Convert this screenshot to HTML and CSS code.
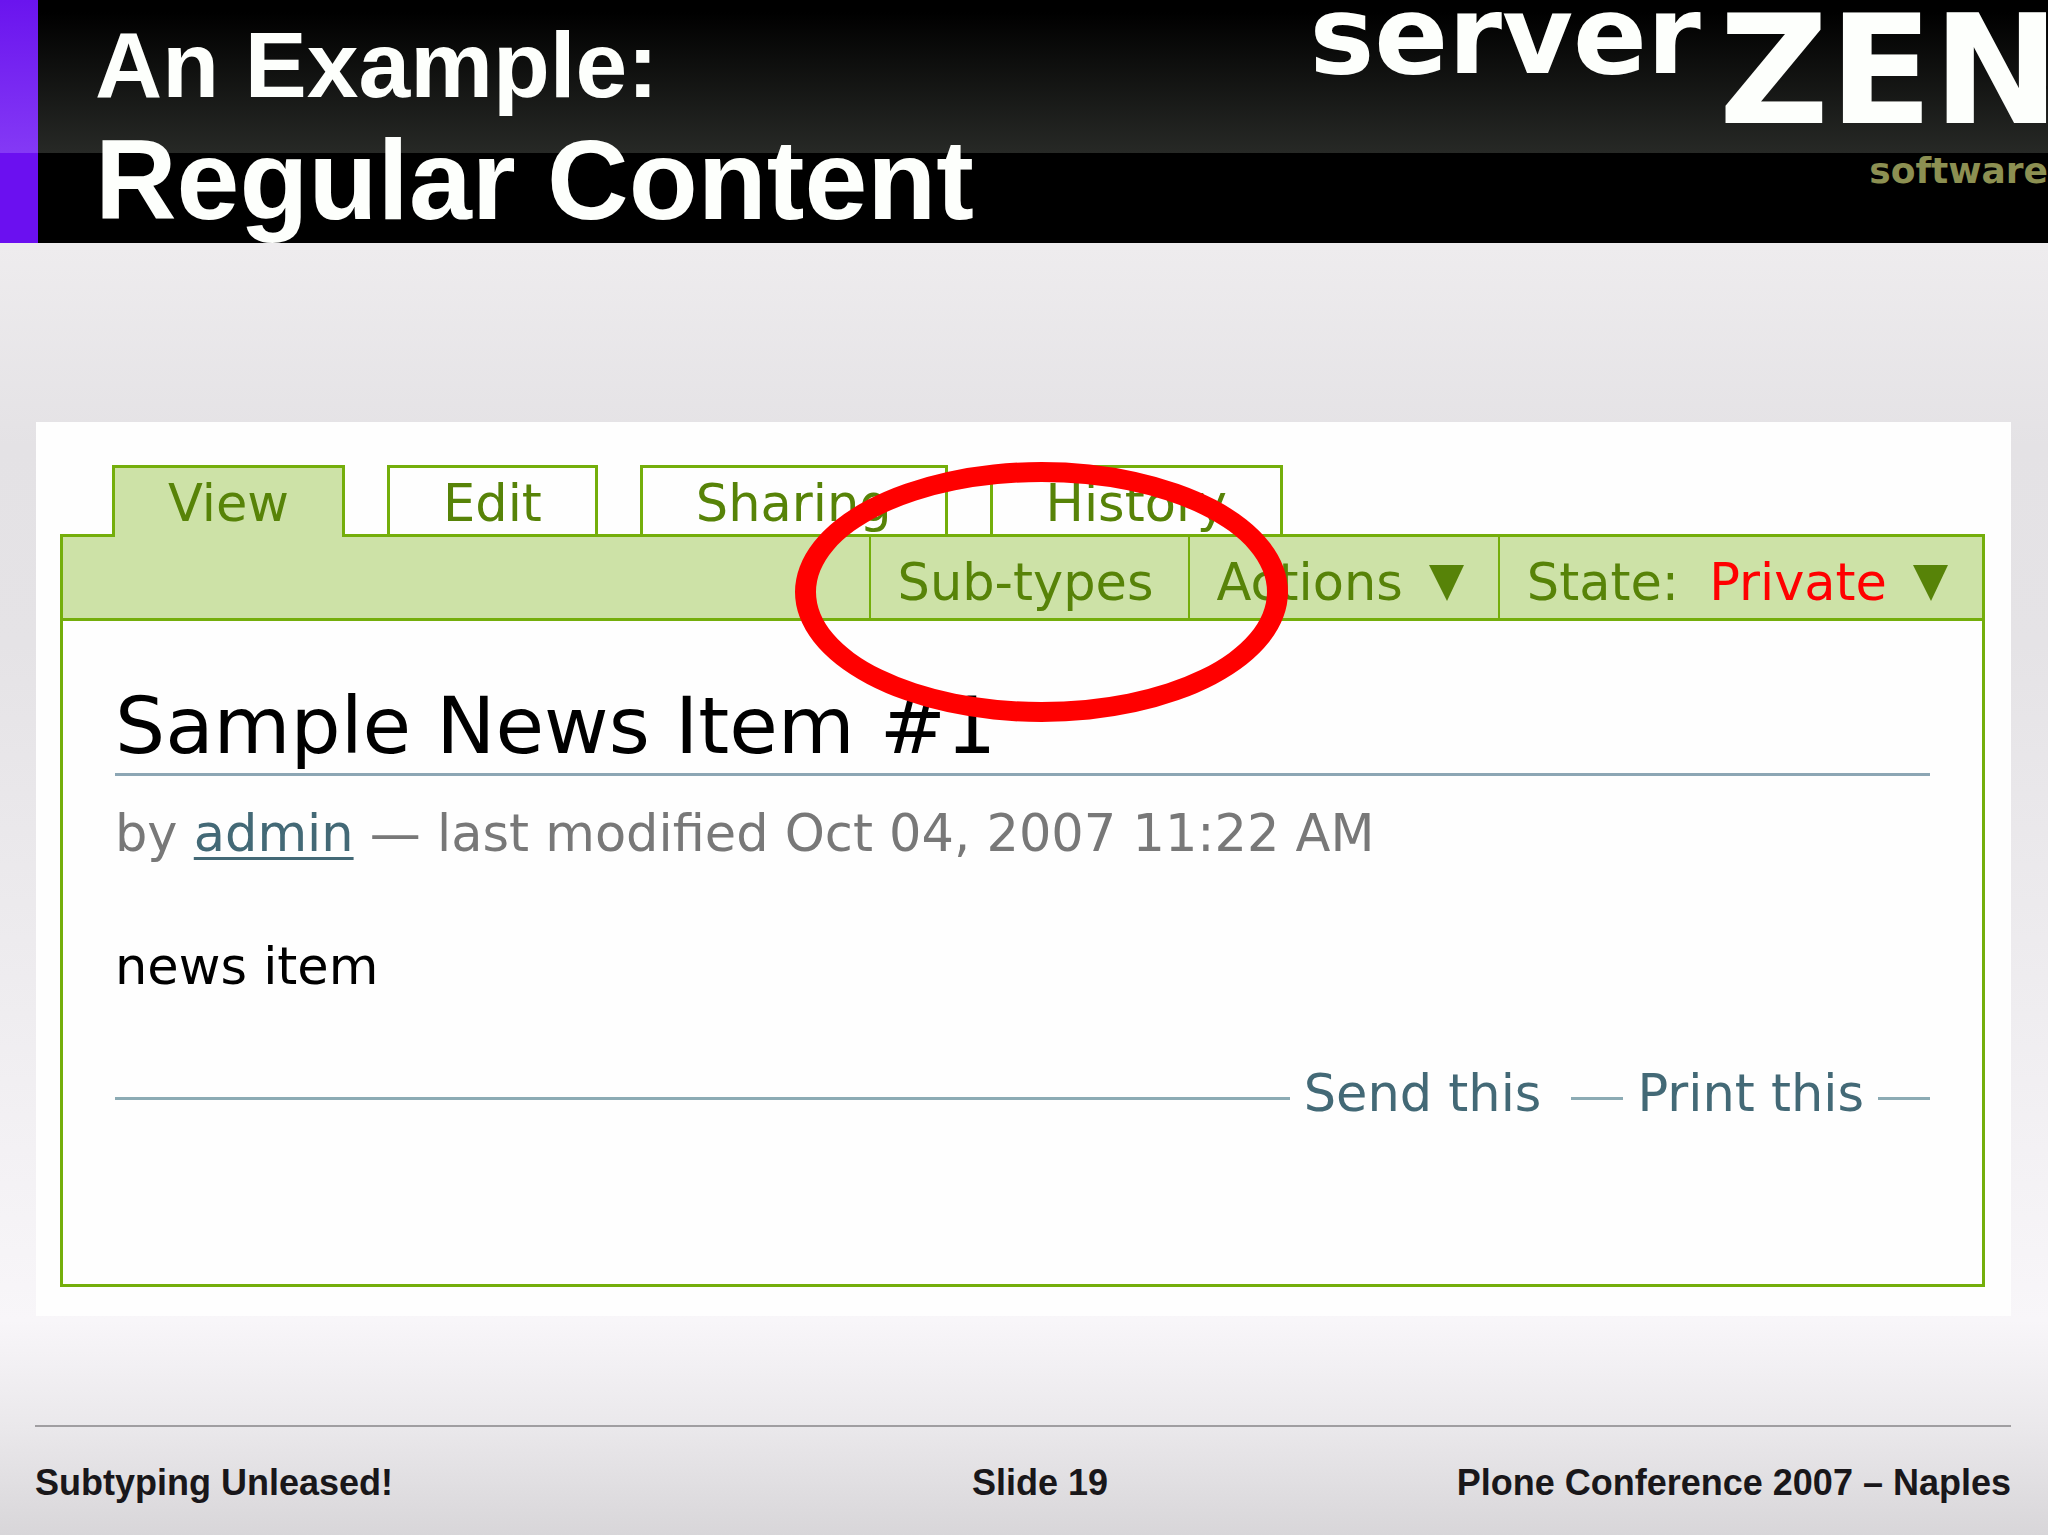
FILE: index.html
```
<!DOCTYPE html>
<html lang="en">
<head>
  <meta charset="UTF-8">
  <title>Subtyping Unleased! – Regular Content</title>
  <link rel="stylesheet" href="styles.css">
</head>
<body>

  <header class="slide-header">
    <h1 class="slide-title">
      <span class="title-small">An Example:</span>
      <span class="title-big">Regular Content</span>
    </h1>
    <div class="logo">
      <div class="logo-name">
        <span class="logo-server">server</span>
        <span class="logo-zen">ZEN</span>
      </div>
      <div class="logo-software">software</div>
    </div>
  </header>

  <main class="panel">
    <nav class="tabs">
      <a href="#" class="tab active">View</a>
      <a href="#" class="tab">Edit</a>
      <a href="#" class="tab">Sharing</a>
      <a href="#" class="tab">History</a>
    </nav>

    <div class="content-box">
      <div class="toolbar">
        <div class="menu">
          <button type="button" class="menu-btn">Sub-types</button>
          <svg class="marker" viewBox="0 0 493 260">
            <path fill="#ff0000" fill-rule="evenodd" d="M0 130a246.500 130 0 1 0 493 0a246.500 130 0 1 0 -493 0zM21 130a225.500 110 0 1 0 451 0a225.500 110 0 1 0 -451 0z"/>
          </svg>
        </div>
        <div class="menu">
          <button type="button" class="menu-btn">Actions
            <svg class="arrow" viewBox="0 0 35 36"><path d="M0 0h35L18 36z"/></svg>
          </button>
        </div>
        <div class="menu">
          <button type="button" class="menu-btn"><span>State: <span class="private">Private</span></span>
            <svg class="arrow" viewBox="0 0 35 36"><path d="M0 0h35L18 36z"/></svg>
          </button>
        </div>
      </div>

      <article class="document">
        <h2>Sample News Item #1</h2>
        <p class="byline">by <a href="#">admin</a> — last modified Oct 04, 2007 11:22 AM</p>
        <p class="body-text">news item</p>
        <div class="doc-actions">
          <span class="rule long"></span>
          <a href="#" class="send">Send this</a>
          <span class="rule"></span>
          <a href="#">Print this</a>
          <span class="rule"></span>
        </div>
      </article>
    </div>
  </main>

  <footer class="slide-footer">
    <div>Subtyping Unleased!</div>
    <div class="slide-number">Slide 19</div>
    <div class="conference">Plone Conference 2007 – Naples</div>
  </footer>

</body>
</html>
```
FILE: styles.css
```
* {
  box-sizing: border-box;
}

body {
  margin: 0;
  min-height: 100vh;
  display: flex;
  flex-direction: column;
  font-family: "DejaVu Sans", Verdana, sans-serif;
  font-size: 51px;
  line-height: 60px;
  background: linear-gradient(#eeecee 16%, #e4e2e5 29%, #e5e3e6 42%, #efedf0 66%, #f8f6f9 86%, #eae8eb 93%, #d8d6d9 100%);
}

h1, h2, p {
  margin: 0;
  font-weight: normal;
}

/* header */
.slide-header {
  display: flex;
  justify-content: space-between;
  align-items: flex-start;
  overflow: hidden;
  color: #fdfffc;
  border-left: 38px solid;
  border-image: linear-gradient(#6a14ee, #8439f5 63%, #6b10f0 63%) 1;
  border-image-slice: 0 0 0 38;
  background: linear-gradient(#000 5%, #272926 63%, #000 63%);
}

.slide-title {
  padding: 13px 0 0 57px;
  font-family: "Liberation Sans", Arial, sans-serif;
  font-weight: bold;
}

.title-small,
.title-big {
  display: block;
}

.title-small {
  font-size: 93px;
  line-height: 104px;
}

.title-big {
  font-size: 113px;
  line-height: 126px;
}

.logo {
  margin-right: -12px;
  font-weight: bold;
}

.logo-name {
  display: flex;
  align-items: flex-start;
  gap: 18px;
}

.logo-server {
  font-size: 109px;
  line-height: 72px;
}

.logo-zen {
  font-size: 152px;
  line-height: 142px;
}

.logo-software {
  padding: 8px 12px 0 0;
  font-size: 36px;
  line-height: 42px;
  text-align: right;
  color: #8c9052;
}

/* Plone page */
.panel {
  margin: 179px 37px 0 36px;
  padding: 43px 26px 29px 24px;
  background: #fefefe;
}

.tabs {
  display: flex;
  gap: 42px;
  padding-left: 52px;
}

.tab {
  padding: 6px 53px 0;
  border: 3px solid #74ae0b;
  border-bottom: none;
  color: #578308;
  text-decoration: none;
}

.tab.active {
  position: relative;
  margin-bottom: -3px;
  padding-bottom: 3px;
  background: #cde2a7;
}

.content-box {
  border: 3px solid #74ae0b;
}

.toolbar {
  display: flex;
  justify-content: flex-end;
  background: #cde2a7;
  border-bottom: 3px solid #74ae0b;
}

.menu {
  position: relative;
  border-left: 2px solid #74ae0b;
}

.menu-btn {
  display: flex;
  align-items: center;
  gap: 26px;
  padding: 16px 34px 5px 27px;
  border: none;
  background: none;
  font: inherit;
  color: #578308;
}

.arrow {
  width: 35px;
  height: 36px;
  fill: #578308;
}

.private {
  margin-left: 14px;
  color: #ff0000;
}

/* red ring around the Sub-types menu */
.marker {
  position: absolute;
  z-index: 1;
  top: -75px;
  left: -76px;
  width: 493px;
  height: 260px;
  pointer-events: none;
}

.document {
  padding: 59px 52px 160px;
}

.document a {
  color: #436976;
}

.document h2 {
  font-size: 79px;
  line-height: 93px;
  color: #000;
  border-bottom: 3px solid #8ca6b4;
}

.byline {
  margin-top: 28px;
  color: #787878;
}

.byline a {
  text-decoration-thickness: 3px;
  text-underline-offset: 6px;
}

.body-text {
  margin-top: 73px;
  color: #000;
}

.doc-actions {
  display: flex;
  align-items: center;
  gap: 14px;
  margin-top: 67px;
}

.doc-actions a {
  text-decoration: none;
}

.doc-actions .send {
  margin-right: 16px;
}

.rule {
  width: 52px;
  height: 3px;
  margin-top: 8px;
  background: #8cabb4;
}

.rule.long {
  flex: 1;
}

/* footer */
.slide-footer {
  display: grid;
  grid-template-columns: 1fr auto 1fr;
  margin: 109px 37px 0 35px;
  padding: 35px 0 30px;
  border-top: 2px solid #a09ea1;
  font-family: "Liberation Sans", Arial, sans-serif;
  font-size: 36px;
  line-height: 42px;
  font-weight: bold;
  color: #19171a;
}

.slide-number {
  padding-left: 34px;
}

.conference {
  text-align: right;
}
```
